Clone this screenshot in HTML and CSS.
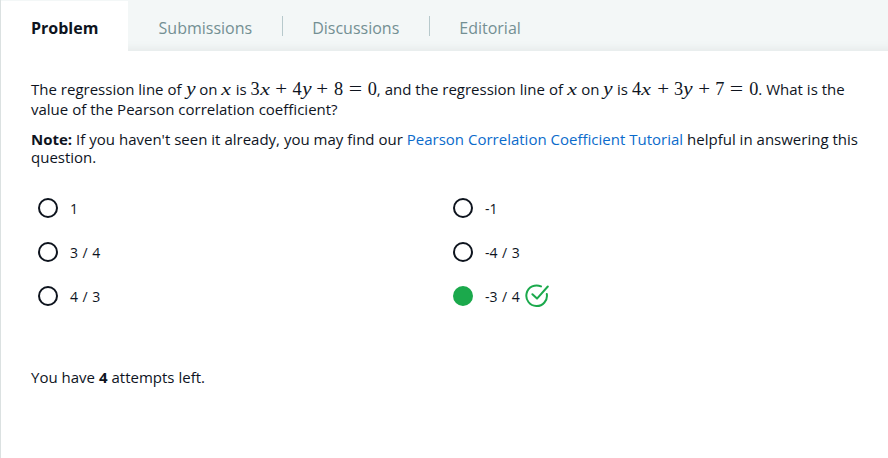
FILE: index.html
```html
<!DOCTYPE html>
<html lang="en">
<head>
<meta charset="utf-8">
<title>Problem</title>
<link rel="stylesheet" href="styles.css">
</head>
<body>
<nav class="tabs">
  <a class="tab active">Problem</a>
  <a class="tab">Submissions</a>
  <a class="tab">Discussions</a>
  <a class="tab">Editorial</a>
</nav>
<main class="content">
  <p class="question">The regression line of <span class="math"><i class="y">y</i></span> on <span class="math"><i class="x">x</i></span> is <span class="math"><b>3</b><i class="x">x</i><s>+</s><b>4</b><i class="y">y</i><s>+</s><b>8</b><s class="eq">=</s><b>0</b></span>, and the regression line of <span class="math"><i class="x">x</i></span> on <span class="math"><i class="y">y</i></span> is <span class="math"><b>4</b><i class="x">x</i><s>+</s><b>3</b><i class="y">y</i><s>+</s><b>7</b><s class="eq">=</s><b>0</b></span>. What is the value of the Pearson correlation coefficient?</p>
  <p class="note"><strong>Note:</strong> If you haven't seen it already, you may find our <a class="link">Pearson Correlation Coefficient Tutorial</a> helpful in answering this question.</p>
  <div class="options">
    <label class="option"><span class="radio"></span>1</label>
    <label class="option"><span class="radio"></span>-1</label>
    <label class="option"><span class="radio"></span>3 / 4</label>
    <label class="option"><span class="radio"></span>-4 / 3</label>
    <label class="option"><span class="radio"></span>4 / 3</label>
    <label class="option"><span class="radio checked"></span>-3 / 4
      <svg class="tick" viewBox="0 0 24 24" width="24" height="24"><path d="M16 2.4A10.3 10.3 0 1 0 21.8 10M7.4 10.3L12 14.6L22.8 2.5"/></svg></label>
  </div>
  <p class="attempts">You have <strong>4</strong> attempts left.</p>
</main>
</body>
</html>
```
FILE: styles.css
```css
* { box-sizing: border-box; }
body {
  margin: 0;
  height: 458px;
  overflow: hidden;
  border-left: 1px solid #dbe1e1;
  background: #fff;
  color: #0e141e;
  font-family: "Open Sans", "Noto Sans", sans-serif;
  font-size: 15px;
  word-spacing: 0.05px;
}
.tabs {
  display: flex;
  height: 51px;
  padding-top: 1px;
  margin-left: -1px;
  background: #f3f7f7;
  box-shadow: inset 0 -10px 10px -8px #e3e8e8;
}
.tab {
  position: relative;
  padding: 0 30px;
  font-size: 16px;
  line-height: 54px;
  color: #738f93;
}
.tab.active {
  width: 127px;
  margin-left: 1px;
  background: #fff;
  color: #0e141e;
  font-weight: 700;
}
.tab:not(.active) { padding: 0 29.4px 0 30.6px; }
.tab:nth-child(n+3)::before {
  content: "";
  position: absolute;
  left: 0;
  top: 15px;
  width: 1px;
  height: 20px;
  background: #b7c9cc;
}
.content { padding: 28px 20px 0 30px; }
p { margin: 0; }
.question { line-height: 20px; }
.note { margin-top: 11px; line-height: 18px; }
.link { color: #0b6bcb; }
.math {
  font-family: "Liberation Serif", serif;
  font-size: 18.3px;
  line-height: 16px;
  white-space: nowrap;
}
.math b { font-weight: 400; }
.math i, .math s {
  display: inline-block;
  text-align: center;
  text-decoration: none;
}
.math .x { width: 10.4px; font-size: 17.5px; transform: scaleX(1.25); }
.math .y { width: 9.7px; transform: scaleX(1.15); }
.math s { width: 22.5px; transform: scaleX(1.15); }
.math .eq { width: 24.7px; transform: scaleX(1.3); }
.options {
  display: grid;
  grid-template-columns: 415px 1fr;
  grid-auto-rows: 44px;
  margin-top: 20px;
  padding-left: 7px;
}
.option {
  display: flex;
  align-items: center;
  font-size: 14px;
  word-spacing: 0.9px;
}
.radio {
  width: 20px;
  height: 20px;
  margin-right: 12px;
  border: 2px solid #0e141e;
  border-radius: 50%;
}
.radio.checked { background: #1ba94c; border-color: #1ba94c; }
.tick {
  margin-left: 5px;
  fill: none;
  stroke: #1ba94c;
  stroke-width: 2;
  stroke-linecap: round;
  stroke-linejoin: round;
}
.attempts { margin-top: 50px; line-height: 18px; }
```
